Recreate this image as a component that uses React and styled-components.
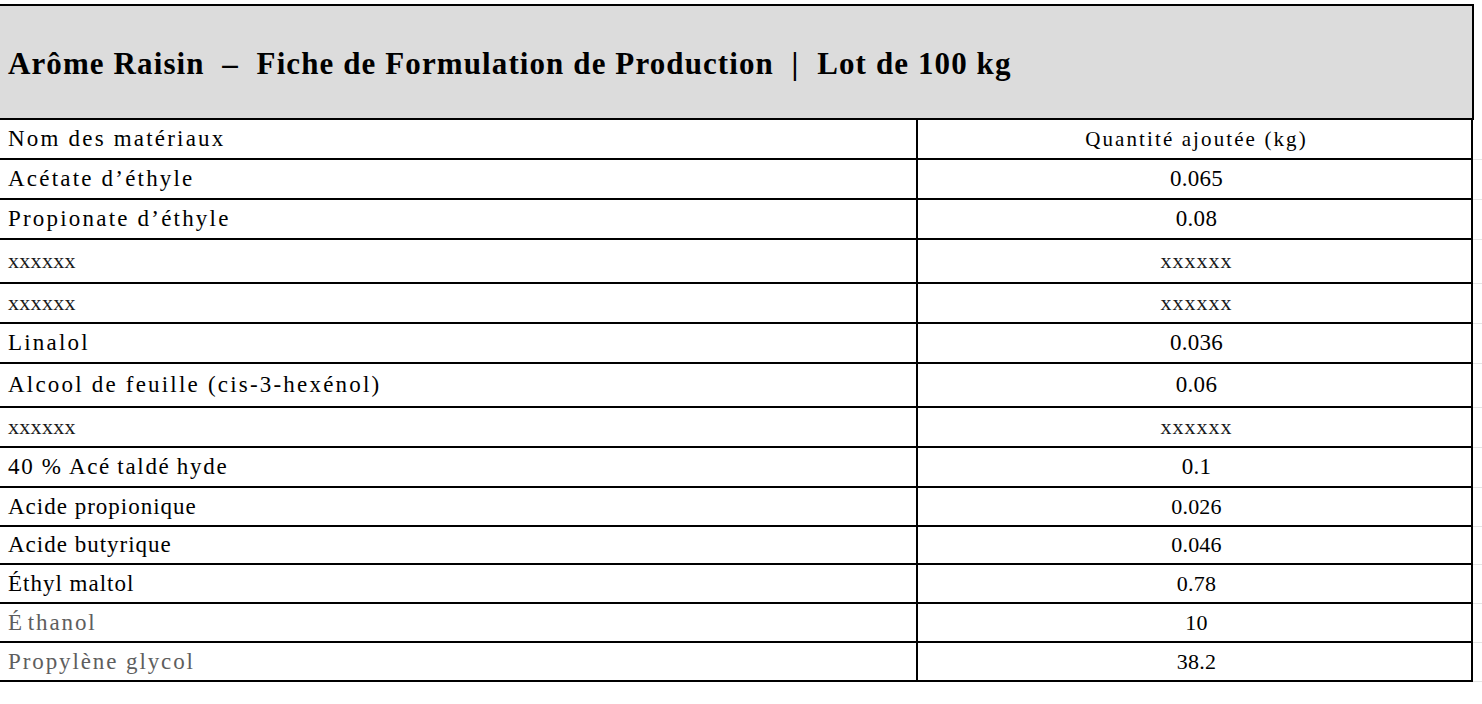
import React from "react";
import styled, { createGlobalStyle } from "styled-components";

const GlobalStyle = createGlobalStyle`
  html, body {
    margin: 0;
    padding: 0;
    background: #ffffff;
  }
  body {
    font-family: "Liberation Serif", "Times New Roman", serif;
    color: #000;
  }
`;

const rows = [
  { name: "Nom des matériaux", qty: "Quantité ajoutée (kg)", h: 40, nameKind: "wide", qtyKind: "label" },
  { name: "Acétate d’éthyle", qty: "0.065", h: 40, nameKind: "wide" },
  { name: "Propionate d’éthyle", qty: "0.08", h: 40, nameKind: "wide" },
  { name: "xxxxxx", qty: "xxxxxx", h: 44, nameKind: "mask", qtyKind: "mask" },
  { name: "xxxxxx", qty: "xxxxxx", h: 40, nameKind: "mask", qtyKind: "mask" },
  { name: "Linalol", qty: "0.036", h: 40, nameKind: "wide" },
  { name: "Alcool de feuille (cis-3-hexénol)", qty: "0.06", h: 44, nameKind: "wide" },
  { name: "xxxxxx", qty: "xxxxxx", h: 40, nameKind: "mask", qtyKind: "mask" },
  { name: "40 % Acé\u2009taldé\u2009hyde", qty: "0.1", h: 40, nameKind: "mid" },
  { name: "Acide propionique", qty: "0.026", h: 39, nameKind: "tight", qtyKind: "small" },
  { name: "Acide butyrique", qty: "0.046", h: 38, nameKind: "tight", qtyKind: "small" },
  { name: "Éthyl maltol", qty: "0.78", h: 39, nameKind: "tight", qtyKind: "small" },
  { name: "É\u200athanol", qty: "10", h: 39, nameKind: "muted", qtyKind: "small" },
  { name: "Propylène glycol", qty: "38.2", h: 39, nameKind: "muted", qtyKind: "small" },
];

const nameStyles = {
  wide: "font-size: 23px; letter-spacing: 2.2px; color: #000;",
  mid: "font-size: 23px; letter-spacing: 1.7px; color: #000;",
  tight: "font-size: 23px; letter-spacing: 1px; color: #000;",
  muted: "font-size: 23px; letter-spacing: 1.9px; color: #5e5e5e;",
  mask: "font-size: 22px; letter-spacing: 0.3px; color: #1a1a1a;",
};

const qtyStyles = {
  label: "font-size: 21px; letter-spacing: 2.1px;",
  value: "font-size: 23px; letter-spacing: 0.3px;",
  small: "font-size: 22px; letter-spacing: 0.2px;",
  mask: "font-size: 22px; letter-spacing: 1px; color: #1a1a1a;",
};

export default function App() {
  return (
    <>
      <GlobalStyle />
      <Sheet>
        <Title>{"Arôme Raisin  –  Fiche de Formulation de Production  |  Lot de 100 kg"}</Title>
        {rows.map((r, i) => (
          <Row key={i} $h={r.h}>
            <NameCell $kind={r.nameKind || "wide"}>{r.name}</NameCell>
            <QtyCell $kind={r.qtyKind || "value"}>{r.qty}</QtyCell>
            <Gutter />
          </Row>
        ))}
      </Sheet>
    </>
  );
}

const Sheet = styled.div`
  width: 1482px;
  padding-top: 4px;
  display: flex;
  flex-direction: column;
`;

const Title = styled.div`
  box-sizing: border-box;
  width: 1474px;
  height: 116px;
  background: #dcdcdc;
  border-top: 2px solid #000;
  border-bottom: 2px solid #000;
  border-right: 2px solid #000;
  display: flex;
  align-items: center;
  padding: 4px 0 0 8px;
  font-family: "Liberation Serif", "Times New Roman", serif;
  font-weight: bold;
  font-size: 31px;
  letter-spacing: 1.1px;
  white-space: pre;
  color: #000;
`;

const Row = styled.div`
  display: grid;
  grid-template-columns: 918px 555px 9px;
  height: ${(p) => p.$h}px;
`;

const Cell = styled.div`
  box-sizing: border-box;
  border-bottom: 2px solid #000;
  border-right: 2px solid #000;
  display: flex;
  align-items: center;
  white-space: pre;
  font-family: "Liberation Serif", "Times New Roman", serif;
`;

const NameCell = styled(Cell)`
  padding-left: 8px;
  ${(p) => nameStyles[p.$kind]}
`;

const QtyCell = styled(Cell)`
  justify-content: center;
  padding-left: 4px;
  ${(p) => qtyStyles[p.$kind]}
`;

const Gutter = styled.div`
  box-sizing: border-box;
  border-bottom: 1px solid #e4e4e4;
  margin-bottom: 0.5px;
`;
